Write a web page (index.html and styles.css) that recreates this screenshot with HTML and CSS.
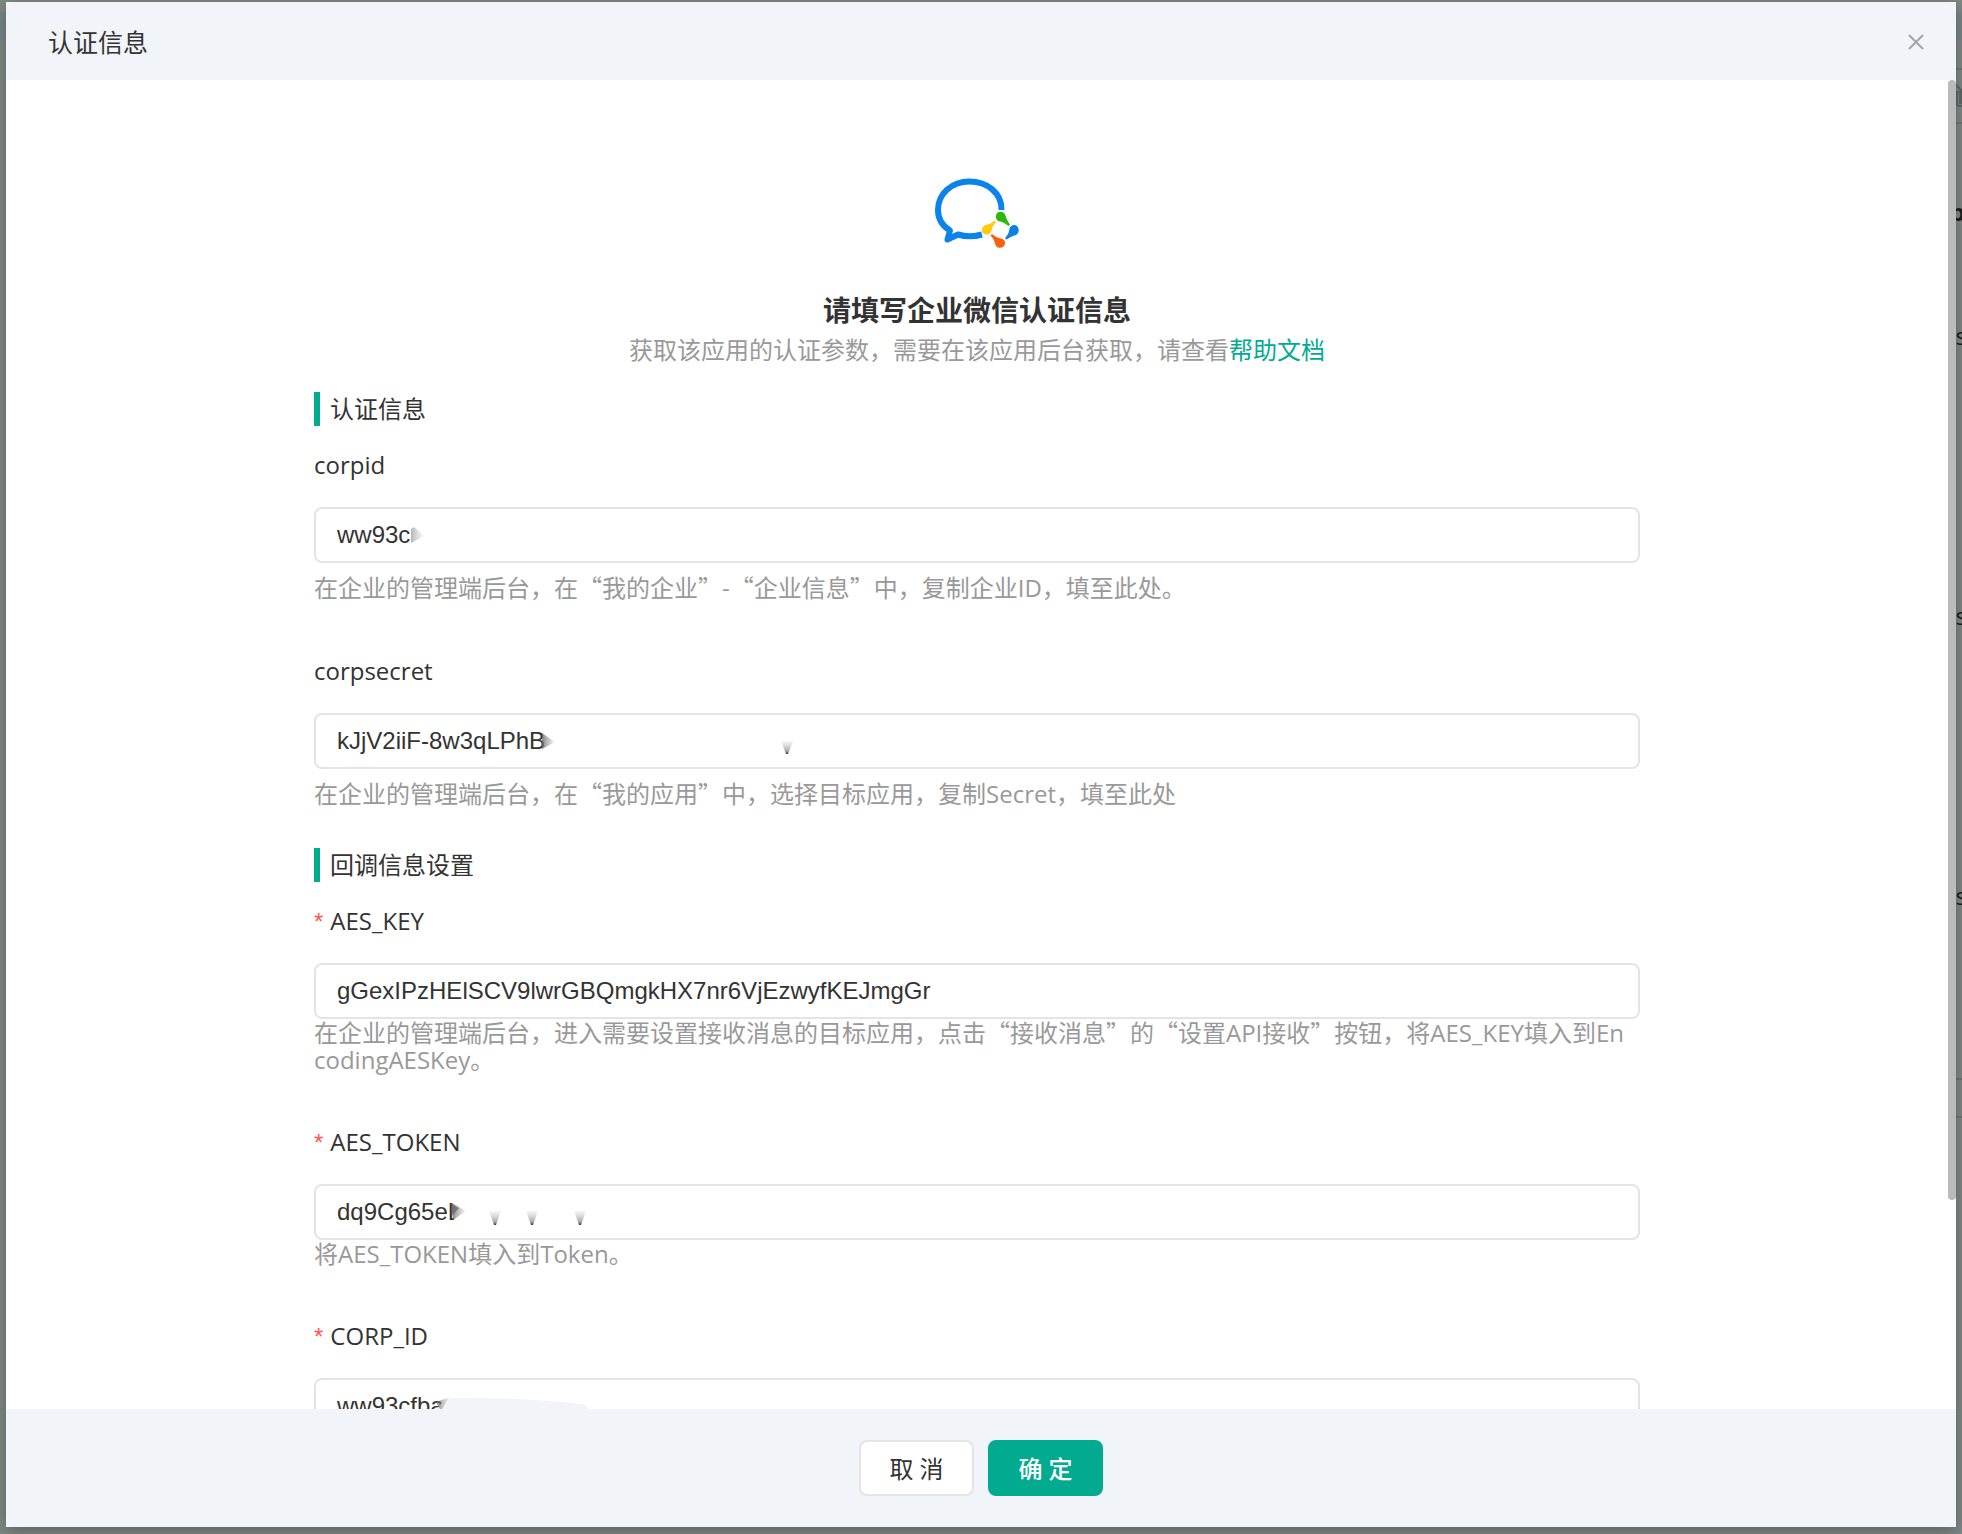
FILE: index.html
```html
<!DOCTYPE html>
<html lang="zh-CN">
<head>
<meta charset="utf-8">
<title>认证信息</title>
<link rel="stylesheet" href="styles.css">
</head>
<body>
<div class="backdrop" aria-hidden="true">
  <div class="backdrop-bar"></div>
  <div class="backdrop-line line-a"></div>
  <svg class="backdrop-icon" width="20" height="24" viewBox="0 0 20 24" fill="none" stroke="#5d696b" stroke-width="2"><path d="M0 1l7 7H0M1 8v14M4 10v9h2v-9zM2 22h8"/></svg>
  <div class="backdrop-line line-b"></div>
  <span class="backdrop-text text-title">p</span>
  <span class="backdrop-text text-a">s</span>
  <span class="backdrop-text text-b">s</span>
  <span class="backdrop-text text-c">s</span>
  <div class="backdrop-line line-c"></div>
  <div class="backdrop-line line-d"></div>
</div>

<div class="modal" role="dialog" aria-labelledby="modal-title">
  <header class="modal-header">
    <h1 class="modal-title" id="modal-title">认证信息</h1>
    <button class="close" type="button" aria-label="关闭">
      <svg width="16" height="16" viewBox="0 0 16 16" fill="none" stroke="#a3a5a8" stroke-width="2"><path d="M1 1l14 14M15 1L1 15"/></svg>
    </button>
  </header>

  <form class="modal-form" id="auth-form">
    <div class="intro">
      <svg class="logo" width="150" height="120" viewBox="2 0 150 120" aria-hidden="true">
        <path d="M101.500 60C102 43 87 31.500 69.500 31.500C52 31.500 38 43.500 38 60C38 69 42.500 76 50 80.500L47.500 89.500L58 84.500C66 86.800 75 86.500 82 84.500" fill="none" stroke="#0a84ea" stroke-width="6" stroke-linejoin="round"/>
        <path d="M96 65.500C96.500 61 103.500 60.500 105.300 65C106 68 107.500 71 110 74.500L108.500 76C105 73.500 103 72 100 71.500C97 71 95.500 68.500 96 65.500Z" fill="#2fb80c"/>
        <path d="M114.500 75C119 75.500 120.500 82.500 116 85C112.500 86 110 87 106.500 89.500L105 88.500C107.500 85 109 83 109.300 79.500C109.800 76.500 111.500 75 114.500 75Z" fill="#0a7fe6"/>
        <path d="M105 93.500C104.500 98.500 97.500 99.500 95.500 95C94.800 91.500 93.500 88.500 90.500 85.500L92 84C95.500 86.500 97.500 88 101 88.500C104 89 105.300 91 105 93.500Z" fill="#fa5f0a"/>
        <path d="M86 84.500C81 84 80.500 77.500 85 75.200C88.500 74.500 91.500 73.500 94.500 70.500L96 72C93.500 75 92 77.500 91.500 80.500C91 83 89 84.800 86 84.500Z" fill="#ffc90c"/>
      </svg>
      <h2 class="intro-title">请填写企业微信认证信息</h2>
      <p class="intro-text">获取该应用的认证参数，需要在该应用后台获取，请查看<a class="link" href="#help">帮助文档</a></p>
    </div>

    <section class="group">
      <h3 class="group-title">认证信息</h3>
      <div class="field field-spaced">
        <label class="label" for="corpid">corpid</label>
        <div class="control">
          <input class="input" id="corpid" type="text" value="ww93c">
          <svg class="mask" width="200" height="56" viewBox="0 0 200 56">
            <defs>
              <linearGradient id="fade-right"><stop offset="0" stop-color="#666" stop-opacity=".8"/><stop offset="1" stop-color="#999" stop-opacity=".1"/></linearGradient>
              <linearGradient id="fade-up" x1="0" y1="1" x2="0" y2="0"><stop offset="0" stop-color="#333"/><stop offset=".25" stop-color="#777" stop-opacity=".6"/><stop offset="1" stop-color="#aaa" stop-opacity=".1"/></linearGradient>
            </defs>
            <path d="M97 22l3-2 10 9-13 7z" fill="url(#fade-right)" opacity=".6"/>
          </svg>
        </div>
        <p class="hint">在企业的管理端后台，在<span class="q">“</span>我的企业<span class="q">”</span>-<span class="q">“</span>企业信息<span class="q">”</span>中，复制企业ID，填至此处。</p>
      </div>
      <div class="field field-spaced">
        <label class="label" for="corpsecret">corpsecret</label>
        <div class="control">
          <input class="input" id="corpsecret" type="text" value="kJjV2iiF-8w3qLPhB">
          <svg class="mask" width="500" height="56" viewBox="0 0 500 56">
            <path d="M228 20l13 9-13 7z" fill="url(#fade-right)"/>
            <path d="M467 28h12l-5 13h-2z" fill="url(#fade-up)"/>
          </svg>
        </div>
        <p class="hint">在企业的管理端后台，在<span class="q">“</span>我的应用<span class="q">”</span>中，选择目标应用，复制Secret，填至此处</p>
      </div>
    </section>

    <section class="group">
      <h3 class="group-title">回调信息设置</h3>
      <div class="field">
        <label class="label required" for="aes-key">AES_KEY</label>
        <div class="control">
          <input class="input" id="aes-key" type="text" value="gGexIPzHElSCV9lwrGBQmgkHX7nr6VjEzwyfKEJmgGr" required>
        </div>
        <p class="hint">在企业的管理端后台，进入需要设置接收消息的目标应用，点击<span class="q">“</span>接收消息<span class="q">”</span>的<span class="q">“</span>设置API接收<span class="q">”</span>按钮，将AES_KEY填入到EncodingAESKey。</p>
      </div>
      <div class="field">
        <label class="label required" for="aes-token">AES_TOKEN</label>
        <div class="control">
          <input class="input" id="aes-token" type="text" value="dq9Cg65eL" required>
          <svg class="mask" width="500" height="56" viewBox="0 0 500 56">
            <path d="M140 16h12v24h-12z" fill="#fff"/>
            <path d="M138 19l14 8-13 9z" fill="url(#fade-right)"/>
            <path d="M137 20l8 4-8 9z" fill="#555" opacity=".6"/>
            <path d="M175 27h12l-5 14h-2zM212 27h12l-5 14h-2zM260 27h12l-5 14h-2z" fill="url(#fade-up)"/>
          </svg>
        </div>
        <p class="hint">将AES_TOKEN填入到Token。</p>
      </div>
      <div class="field">
        <label class="label required" for="corp-id">CORP_ID</label>
        <div class="control">
          <input class="input" id="corp-id" type="text" value="ww93cfba" required>
          <svg class="mask" width="500" height="56" viewBox="0 0 500 56">
            <path d="M124 30l8-12h12v22h-20z" fill="#fff"/>
            <path d="M122 24l14-5-9 14z" fill="url(#fade-right)"/>
            <path d="M128 34l8-14q60-1 134 6l10 10H128z" fill="#f1f5fa"/>
          </svg>
        </div>
        <p class="hint">将CORP_ID填入到企业ID。</p>
      </div>
    </section>
  </form>
  <div class="scroll-thumb"></div>

  <footer class="modal-footer">
    <button class="btn" type="button">取 消</button>
    <button class="btn btn-primary" type="submit" form="auth-form">确 定</button>
  </footer>
</div>
</body>
</html>
```
FILE: styles.css
```css
* {
  box-sizing: border-box;
}

body {
  margin: 0;
  height: 100vh;
  overflow: hidden;
  background: #7f8986;
  color: #333;
  font-family: "Open Sans", "Noto Sans CJK SC", sans-serif;
  font-size: 24px;
}

h1, h2, h3, p {
  margin: 0;
  font-weight: 400;
}

/* Page behind the dialog */
.backdrop {
  position: absolute;
  inset: 0;
  overflow: hidden;
}

.backdrop-bar {
  position: absolute;
  top: 12px;
  left: 0;
  right: 0;
  height: 28px;
  background: #788789;
}

.backdrop-line {
  position: absolute;
  left: 50%;
  right: 0;
  height: 2px;
  background: #6d7774;
}

.line-a { top: 68px; }
.line-b { top: 122px; }
.line-c { top: 1078px; }
.line-d { top: 1116px; }

.backdrop-icon {
  position: absolute;
  top: 84px;
  right: -14px;
}

.backdrop-text {
  position: absolute;
  right: -5px;
  line-height: 36px;
  color: #1c211f;
}

.text-title {
  top: 194px;
  right: -3px;
  font-weight: 700;
}

.text-a { top: 318px; }
.text-b { top: 598px; }
.text-c { top: 878px; }

/* Dialog */
.modal {
  position: relative;
  display: flex;
  flex-direction: column;
  height: calc(100vh - 9px);
  margin: 2px 6px 7px;
  background: #fff;
  box-shadow: 0 4px 16px rgba(0, 0, 0, .3);
}

.modal-header {
  display: flex;
  flex: none;
  align-items: center;
  justify-content: space-between;
  height: 78px;
  padding: 2px 32px 0 42px;
  background: #f1f5fa;
}

.modal-title {
  font-size: 25px;
  line-height: 36px;
}

.close {
  display: flex;
  padding: 0;
  border: 0;
  background: none;
}

.modal-form {
  flex: 1;
  min-height: 0;
  overflow: hidden;
  padding: 70px 316px 0 308px;
}

.scroll-thumb {
  position: absolute;
  top: 78px;
  right: 0;
  width: 8px;
  height: calc(73% + 7px);
  border-radius: 4px;
  background: #bababa;
}

.intro {
  display: flex;
  flex-direction: column;
  align-items: center;
  margin-bottom: 22px;
  text-align: center;
}

.intro-title {
  margin-top: 20px;
  font-size: 28px;
  font-weight: 700;
  line-height: 40px;
}

.intro-text {
  color: #999;
  line-height: 40px;
}

.link {
  color: #02ab90;
  text-decoration: none;
}

.group-title {
  margin-bottom: 21px;
  padding-left: 10px;
  border-left: 6px solid #02ab90;
  font-size: 24px;
  line-height: 34px;
}

.group + .group {
  margin-top: -11px;
}

.field {
  padding-bottom: 51px;
}

.label {
  display: block;
  margin-bottom: 24px;
  line-height: 36px;
}

.required::before {
  content: "*";
  margin-right: 7px;
  color: #f55;
  font-family: "Liberation Sans", Arial, sans-serif;
  line-height: 1;
}

.control {
  position: relative;
}

.input {
  display: block;
  width: 100%;
  height: 56px;
  padding: 0 21px;
  border: 2px solid #e4e4e4;
  border-radius: 8px;
  background: #fff;
  color: #333;
  font: 24px "Liberation Sans", Arial, sans-serif;
}

.mask {
  position: absolute;
  top: 0;
  left: 0;
  pointer-events: none;
}

.hint {
  padding-right: 8px;
  color: #999;
  line-height: 27px;
  word-break: break-all;
}

.field-spaced {
  padding-bottom: 52px;
}

.field-spaced .hint {
  margin-top: 11px;
}

/* Full-width Chinese quotation marks */
.q {
  font-family: "Noto Sans CJK SC", sans-serif;
  line-height: 0;
}

.modal-footer {
  position: relative;
  display: flex;
  flex: none;
  justify-content: center;
  gap: 14px;
  padding: 31px 0;
  background: #f1f5fa;
}

.btn {
  min-width: 115px;
  height: 56px;
  padding: 0 0 2px;
  border: 2px solid #e4e4e4;
  border-radius: 8px;
  background: #fff;
  color: #333;
  font: inherit;
}

.btn-primary {
  border-color: #02ab90;
  background: #02ab90;
  color: #fff;
  font-weight: 500;
}
```
